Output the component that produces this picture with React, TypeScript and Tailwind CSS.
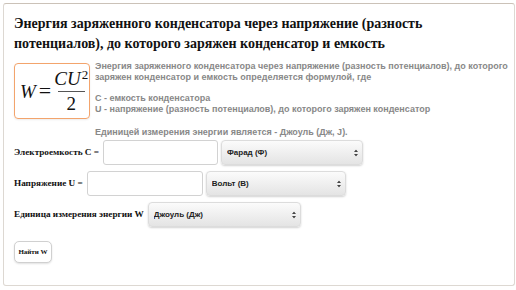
import { ChangeEvent, useState } from 'react'

type Unit = { value: string; label: string }

const capacityUnits: Unit[] = [
  { value: 'F', label: 'Фарад (Ф)' },
  { value: 'mF', label: 'Миллифарад (мФ)' },
  { value: 'uF', label: 'Микрофарад (мкФ)' },
]

const voltageUnits: Unit[] = [
  { value: 'V', label: 'Вольт (В)' },
  { value: 'kV', label: 'Киловольт (кВ)' },
]

const energyUnits: Unit[] = [
  { value: 'J', label: 'Джоуль (Дж)' },
  { value: 'kJ', label: 'Килоджоуль (кДж)' },
]

function SelectBox({ units, width }: { units: Unit[]; width: string }) {
  return (
    <div className={`relative h-[25px] ${width}`}>
      <select className="h-full w-full appearance-none rounded-[4px] border border-[#dcdcdc] bg-linear-to-b from-[#fbfbfb] to-[#e4e4e4] pl-[5px] font-['Liberation_Sans'] text-[8px] font-bold text-[#222] shadow-[0_1px_2px_rgba(0,0,0,0.18)] outline-none">
        {units.map((u) => (
          <option key={u.value} value={u.value}>
            {u.label}
          </option>
        ))}
      </select>
      <svg
        className="pointer-events-none absolute top-1/2 right-[5px] -translate-y-1/2"
        width="4"
        height="7"
        viewBox="0 0 4 7"
      >
        <path d="M2 0 L4 2.6 H0 Z M2 7 L4 4.4 H0 Z" fill="#444" />
      </svg>
    </div>
  )
}

function TextInput({ width, value, onChange }: { width: string; value: string; onChange: (e: ChangeEvent<HTMLInputElement>) => void }) {
  return (
    <input
      type="text"
      value={value}
      onChange={onChange}
      className={`h-[25px] ${width} rounded-[3px] border border-[#d2d2d2] bg-white px-1 text-[10px] outline-none`}
    />
  )
}

export default function App() {
  const [c, setC] = useState('')
  const [u, setU] = useState('')

  return (
    <div className="h-[290px] w-[516px] overflow-hidden bg-white pt-[3px] pl-[3px] font-['Liberation_Serif'] text-[#111]">
      <div className="h-[283px] w-[512px] rounded-[3px] border border-[#ddd8d2] border-t-[#cbc2b8] pt-[10px] pl-[10px]">
        <h1 className="w-[420px] font-['Liberation_Serif'] text-[14px] leading-[20px] font-bold">
          Энергия заряженного конденсатора через напряжение (разность потенциалов), до которого заряжен конденсатор и емкость
        </h1>

        <div className="mt-[7px] flex items-start">
          <div className="mt-[2px] flex h-[56px] w-[76px] shrink-0 items-center rounded-[4px] border-[1.5px] border-[#f3a46c] pl-[5px] shadow-[0_1px_2px_rgba(0,0,0,0.08)]">
            <span className="text-[19px] italic leading-none">W</span>
            <span className="ml-[3px] text-[22px] leading-none">=</span>
            <div className="ml-[3px] flex flex-col items-center">
              <span className="text-[19px] italic leading-[20px]">
                CU<sup className="ml-[1px] text-[13px] not-italic">2</sup>
              </span>
              <span className="mt-[2px] h-px w-[27px] bg-[#555]" />
              <span className="mt-[2px] text-[19px] leading-[19px]">2</span>
            </div>
          </div>

          <div className="ml-[5px] font-['Liberation_Sans'] text-[9px] leading-[11px] font-bold text-[#888]">
            <p>
              Энергия заряженного конденсатора через напряжение (разность потенциалов), до которого
              <br />
              заряжен конденсатор и емкость определяется формулой, где
            </p>
            <p className="mt-[10px]">
              C - емкость конденсатора
              <br />
              U - напряжение (разность потенциалов), до которого заряжен конденсатор
            </p>
            <p className="mt-[12px]">Единицей измерения энергии является - Джоуль (Дж, J).</p>
          </div>
        </div>

        <div className="mt-[2px] flex flex-col gap-[6px] font-['Liberation_Serif'] text-[9.2px] font-bold">
          <div className="flex items-center gap-[3px]">
            <label className="pr-[1px]">Электроемкость C =</label>
            <TextInput width="w-[115px]" value={c} onChange={(e) => setC(e.target.value)} />
            <SelectBox units={capacityUnits} width="w-[142px]" />
          </div>
          <div className="flex items-center gap-[3px]">
            <label className="pr-[1px]">Напряжение U =</label>
            <TextInput width="w-[116px]" value={u} onChange={(e) => setU(e.target.value)} />
            <SelectBox units={voltageUnits} width="w-[140px]" />
          </div>
          <div className="flex items-center gap-[4px]">
            <label>Единица измерения энергии W</label>
            <SelectBox units={energyUnits} width="w-[153px]" />
          </div>
        </div>

        <button className="mt-[14px] h-[22px] w-[38px] rounded-[5px] border border-[#d0d0d0] bg-white font-['Liberation_Serif'] text-[7px] font-bold shadow-[0_1px_2px_rgba(0,0,0,0.12)]">
          Найти W
        </button>
      </div>
    </div>
  )
}
